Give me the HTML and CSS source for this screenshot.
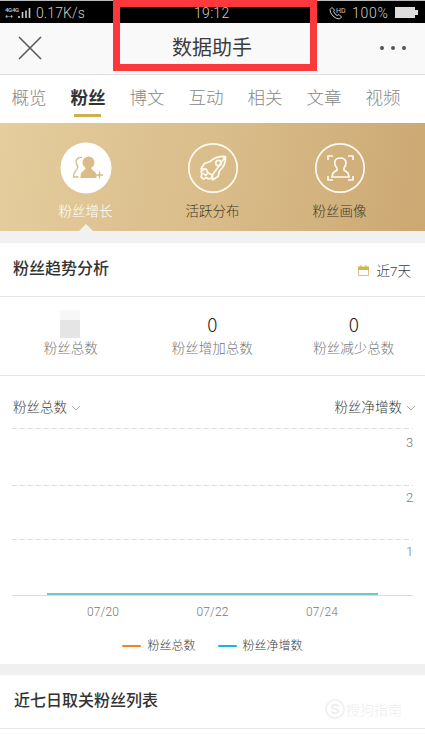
FILE: index.html
```html
<!DOCTYPE html>
<html lang="zh-CN">
<head>
<meta charset="utf-8">
<title>数据助手</title>
<link rel="stylesheet" href="styles.css">
</head>
<body>
<div class="status">
  <div class="sig"><span>4G4G</span><span>+-+</span></div>
  <svg class="bars" width="13" height="12"><path d="M1 11v-2M4.500 11V5M8 11V3.500M11.500 11V1" stroke="#ccc" stroke-width="1.600"/></svg>
  <span class="speed">0.17K/s</span>
  <span class="time">19:12</span>
  <svg class="call" width="19" height="14" fill="none" stroke="#ccc"><path d="M3 1.500L1 3.500Q1 7 4 10T10.500 13L12.500 11 10 8.500 8 9.500Q5.500 8 4.700 5.500L5.500 4Z"/><text x="7" y="7" class="hd">HD</text></svg>
  <span class="percent">100%</span>
  <svg class="battery" width="23" height="11"><path d="M0 0h20v3h3v5h-3v3H0Z" fill="#ddd"/></svg>
</div>
<header class="header">
  <svg width="24" height="24" fill="none" stroke="#555" stroke-width="1.500"><path d="M1 1l22 22M23 1L1 23"/></svg>
  <h1>数据助手</h1>
  <svg width="28" height="6" fill="#555"><circle cx="3" cy="3" r="2"/><circle cx="14" cy="3" r="2"/><circle cx="25" cy="3" r="2"/></svg>
</header>
<div class="marker"></div>
<nav class="tabs">
  <span>概览</span><span class="active">粉丝</span><span>博文</span><span>互动</span><span>相关</span><span>文章</span><span>视频</span>
</nav>
<section class="modes">
  <div class="mode selected">
    <svg width="52" height="52" viewBox="0 0 52 52"><circle cx="26" cy="26" r="25.500" fill="#fff"/><g fill="#d9bc88"><circle cx="28.500" cy="20.500" r="6"/><path d="M25.500 24h6v3l3.500 3q1.500 1 1.500 6H20.500q0-5 1.500-6l3.500-3Z"/></g><path d="M22 15.500q-5-1-6 4 0 3 2 5-.5 3-2.500 4.500-2 2-2 6h5M36 33h7M39.500 29.500v7" fill="none" stroke="#d9bc88" stroke-width="1.400"/></svg>
    <span>粉丝增长</span>
  </div>
  <div class="mode">
    <svg width="52" height="52" viewBox="0 0 52 52" fill="none" stroke="#fffaf0" stroke-width="1.700" stroke-linejoin="round"><circle cx="26" cy="26" r="24.200"/><path d="M38.500 14.500Q29 14 23 19.500L17.500 21.500 14 27H19.500M25.500 33V38L31 34.500 32.500 29Q39 23 38.500 14.500Z"/><circle cx="31.500" cy="21" r="2.700"/><path d="M19.500 27.500l1 2.500 2.500 2 2.500 1-1 3-3 1-2-1.500-3 1.500-2.500-2 1-3-1-2.500 2.500-2ZM16.500 31l2 2.500 2-2"/></svg>
    <span>活跃分布</span>
  </div>
  <div class="mode">
    <svg width="52" height="52" viewBox="0 0 52 52" fill="none" stroke="#fffaf0" stroke-width="1.700"><circle cx="26" cy="26" r="24.200"/><path d="M14 18v-4h5M34 14h5v4M39 34v4h-5M19 38h-5v-4M23 26Q20 23 21 19 22 16 26.500 16T32 20Q32 24 30 26L30 28 34 31 35 35H18L19 31 23 28Z"/></svg>
    <span>粉丝画像</span>
  </div>
</section>
<main>
<section class="trend">
  <div class="title-row"><h2>粉丝趋势分析</h2><div class="range"><svg width="12" height="12" fill="none"><path d="M.5 3h10v7.500H.5Z" stroke="#e6bd84"/><path d="M0 1.500h11V5H0Z" fill="#d3b64e"/><path d="M3 0v3M8 0v3" stroke="#d3b64e"/></svg><span>近7天</span></div></div>
  <div class="stats">
    <div><i class="masked"></i><span>粉丝总数</span></div>
    <div><b>0</b><span>粉丝增加总数</span></div>
    <div><b>0</b><span>粉丝减少总数</span></div>
  </div>
  <div class="selectors"><span>粉丝总数<svg width="10" height="6"><path d="M1 1l4 4 4-4"/></svg></span><span>粉丝净增数<svg width="10" height="6"><path d="M1 1l4 4 4-4"/></svg></span></div>
  <svg class="chart" width="425" height="184">
    <g stroke="#ddd" stroke-dasharray="5 3"><path d="M12 8.500h401M12 65.500h401M12 119.500h401"/></g>
    <path d="M12 175.500h401" stroke="#ddd"/>
    <path d="M47 174h331" stroke="#70c4d6" stroke-width="2"/>
    <g class="axis"><text x="406" y="27">3</text><text x="406" y="82">2</text><text x="406" y="136">1</text></g>
  </svg>
  <div class="dates"><span>07/20</span><span>07/22</span><span>07/24</span></div>
  <div class="legend"><span><i></i>粉丝总数</span><span><i class="blue"></i>粉丝净增数</span></div>
</section>
<section class="list"><h2>近七日取关粉丝列表</h2><div class="watermark"><i>S</i><span>搜狗指南</span></div></section>
</main>
</body>
</html>
```
FILE: styles.css
```css
* { box-sizing: border-box; }
body { margin: 0; width: 425px; height: 756px; overflow: hidden; background: #fff; color: #3c3c3c; font-family: Roboto, "Noto Sans CJK SC", sans-serif; font-weight: 300; }
h1, h2 { margin: 0; }
span, b, h1, h2 { white-space: nowrap; }
.status { height: 23px; display: flex; align-items: center; background: #000; border-top: 1px solid #bbb; color: #ccc; padding: 1px 7px 0 5px; font-size: 14px; }
.sig { flex: none; display: flex; flex-direction: column; width: 13px; font-size: 6px; line-height: 6px; font-weight: 500; letter-spacing: -.3px; }
.call, .battery, .bars { flex: none; }
.speed { flex: none; margin-left: 5px; width: 158px; font-size: 14px; letter-spacing: .1px; }
.time { flex: none; width: 135px; font-size: 14px; letter-spacing: .3px; }
.hd { fill: #ccc; stroke: none; font: 7px Roboto, sans-serif; }
.percent { flex: none; width: 43px; margin-left: 4px; letter-spacing: .7px; }
.header { height: 52px; display: flex; align-items: center; justify-content: space-between; padding: 0 18px 2px; background: #f9f9f9; border-bottom: 1px solid #ddd; }
.header h1 { font-size: 20px; line-height: 24px; font-weight: 400; padding-left: 3px; }
.marker { position: absolute; left: 113px; top: 0; width: 204px; height: 71px; border: 7px solid #fb383b; }
.tabs { height: 48px; display: grid; grid-template-columns: repeat(7, 59px); justify-content: start; font-size: 17.500px; color: #888; }
.tabs span { position: relative; text-align: center; line-height: 46px; margin-left: -1px; }
.tabs .active { color: #333; font-weight: 600; }
.active::after { content: ""; position: absolute; left: 16px; bottom: 6px; width: 27px; height: 3px; background: #cfae50; }
.modes { height: 108px; display: grid; grid-template-columns: repeat(3, 127px); padding: 19px 0 0 22px; background: linear-gradient(100deg, #e5cd9d, #d9bd8b 50%, #cca872); }
.mode { display: flex; flex-direction: column; align-items: center; position: relative; font-size: 13.500px; color: #443a27; }
.mode span { margin-top: 7px; line-height: 20px; }
.selected { color: #fff; }
.selected::after { content: ""; position: absolute; bottom: 0; border: solid transparent; border-width: 0 7px 7px; border-bottom-color: #f1f1f1; }
main { border-top: 12px solid #f1f1f1; }
.trend { height: 432px; border-bottom: 11px solid #f0f0f0; }
.title-row { height: 54px; padding: 0 14px 0 13px; display: flex; align-items: center; justify-content: space-between; border-bottom: 1px solid #e5e5e5; }
h2 { font-size: 16px; line-height: 20px; font-weight: 500; color: #333; }
.title-row h2 { margin-bottom: 2px; }
.range { display: flex; align-items: center; gap: 7px; font-size: 13.500px; line-height: 20px; margin-top: 3px; }
.range svg { margin-bottom: 1px; }
.stats { height: 79px; border-bottom: 1px solid #e5e5e5; padding-top: 13px; display: grid; grid-template-columns: repeat(3, 141.500px); color: #777; }
.stats div { display: flex; flex-direction: column; align-items: center; font-size: 13.500px; }
.stats b { height: 28px; line-height: 28px; font-family: "Noto Sans CJK SC", sans-serif; font-size: 19px; font-weight: 300; color: #222; }
.stats span { line-height: 20px; }
.masked { width: 20px; height: 28px; margin-left: -2px; background: linear-gradient(#f7f7f7 10px, #e5e5e5 10px); }
.selectors { height: 44px; display: flex; justify-content: space-between; padding: 21px 9px 0 13px; font-size: 13.500px; line-height: 20px; }
.selectors svg { margin: 0 0 1px 4px; fill: none; stroke: #aaa; }
.chart { display: block; }
.axis { font-size: 13px; fill: #777; }
.dates { height: 18px; display: grid; grid-template-columns: repeat(3, 109.500px); justify-content: center; text-align: center; font-size: 12px; line-height: 17px; color: #777; letter-spacing: .1px; }
.legend { display: flex; justify-content: center; gap: 22px; padding-top: 14px; font-size: 12px; line-height: 20px; }
.legend span { display: flex; align-items: center; gap: 6px; }
.legend i { width: 19px; height: 2px; border-radius: 1px; background: #f58220; }
.legend .blue { background: #16b4e7; }
.list { height: 54px; display: flex; align-items: center; justify-content: space-between; padding: 0 23px 0 14px; border-bottom: 1px solid #e8e8e8; }
.list h2 { margin-bottom: 2px; }
.watermark { display: flex; align-items: center; gap: 1px; color: #eee; font-size: 14px; margin-top: 15px; }
.watermark i { width: 20px; height: 20px; border: 2px solid #f1f1f1; border-radius: 50%; font: bold 14px/16px "Liberation Sans", sans-serif; text-align: center; }
```
